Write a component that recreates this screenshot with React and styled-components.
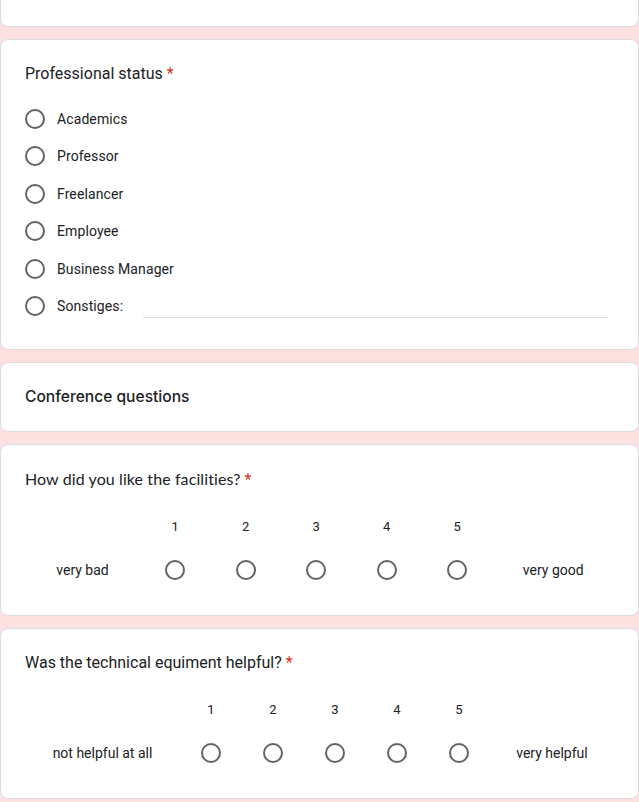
import React from "react";
import styled, { createGlobalStyle } from "styled-components";

const GlobalStyle = createGlobalStyle`
  body {
    margin: 0;
    background: #fde0e0;
    font-family: Roboto, "Liberation Sans", sans-serif;
    color: #202124;
  }
`;

const Page = styled.div`
  display: flex;
  flex-direction: column;
  gap: 12px;
  width: 639px;
  padding-bottom: 20px;
`;

const Card = styled.div`
  box-sizing: border-box;
  background: #fff;
  border: 1px solid #dadce0;
  border-radius: 8px;
  padding: 22px 24px ${(p) => p.$bottom || 22}px;
`;

const CutCard = styled(Card)`
  height: 27px;
  border-top: none;
  border-radius: 0 0 8px 8px;
  padding: 0;
`;

const Title = styled.div`
  font-family: ${(p) =>
    p.$sans ? `Lato, "Open Sans", sans-serif` : `Roboto, "Liberation Sans", sans-serif`};
  font-size: 16px;
  line-height: 24px;
  letter-spacing: ${(p) => (p.$sans ? "0.1px" : "0")};
  color: #202124;
`;

const Required = styled.span`
  font-family: Roboto, "Liberation Sans", sans-serif;
  color: #d93025;
  margin-left: 4px;
`;

const SectionTitle = styled.div`
  font-family: Inter, "Open Sans", sans-serif;
  font-weight: 500;
  font-size: 15.6px;
  line-height: 24px;
  color: #202124;
`;

const Options = styled.div`
  display: flex;
  flex-direction: column;
  margin-top: 14px;
`;

const OptionRow = styled.label`
  display: flex;
  align-items: center;
  height: 37.5px;
  font-size: 14px;
  letter-spacing: 0.1px;
`;

const Radio = styled.span`
  box-sizing: border-box;
  flex: none;
  width: 20px;
  height: 20px;
  border: 2px solid #5f6368;
  border-radius: 50%;
`;

const OptionText = styled.span`
  margin-left: 12px;
`;

const OtherInput = styled.span`
  flex: 1;
  align-self: center;
  height: 1px;
  margin: 22px 6px 0 20px;
  background: #e0e0e0;
`;

const Scale = styled.div`
  display: grid;
  grid-template-columns: ${(p) => p.$cols};
  grid-template-rows: 24px 48px;
  row-gap: 8px;
  margin-top: 22px;
  font-size: 14px;
`;

const Cell = styled.div`
  display: flex;
  align-items: center;
  justify-content: center;
`;

const Number = styled(Cell)`
  font-size: 13px;
`;

const ScaleLabel = styled(Cell)`
  font-size: 14px;
`;

const statuses = ["Academics", "Professor", "Freelancer", "Employee", "Business Manager"];

function LinearScale({ cols, low, high }) {
  const nums = [1, 2, 3, 4, 5];
  return (
    <Scale $cols={cols}>
      <Cell />
      {nums.map((n) => (
        <Number key={n}>{n}</Number>
      ))}
      <Cell />
      <ScaleLabel>{low}</ScaleLabel>
      {nums.map((n) => (
        <Cell key={n}>
          <Radio />
        </Cell>
      ))}
      <ScaleLabel>{high}</ScaleLabel>
    </Scale>
  );
}

export default function App() {
  return (
    <>
      <GlobalStyle />
      <Page>
        <CutCard />
        <Card $bottom={24}>
          <Title>
            Professional status<Required>*</Required>
          </Title>
          <Options>
            {statuses.map((s) => (
              <OptionRow key={s}>
                <Radio />
                <OptionText>{s}</OptionText>
              </OptionRow>
            ))}
            <OptionRow>
              <Radio />
              <OptionText>Sonstiges:</OptionText>
              <OtherInput />
            </OptionRow>
          </Options>
        </Card>
        <Card>
          <SectionTitle>Conference questions</SectionTitle>
        </Card>
        <Card $bottom={21}>
          <Title $sans>
            How did you like the facilities?<Required>*</Required>
          </Title>
          <LinearScale cols="115px repeat(5, 70.5px) 1fr" low="very bad" high="very good" />
        </Card>
        <Card $bottom={21}>
          <Title>
            Was the technical equiment helpful?<Required>*</Required>
          </Title>
          <LinearScale cols="155px repeat(5, 62px) 1fr" low="not helpful at all" high="very helpful" />
        </Card>
      </Page>
    </>
  );
}
